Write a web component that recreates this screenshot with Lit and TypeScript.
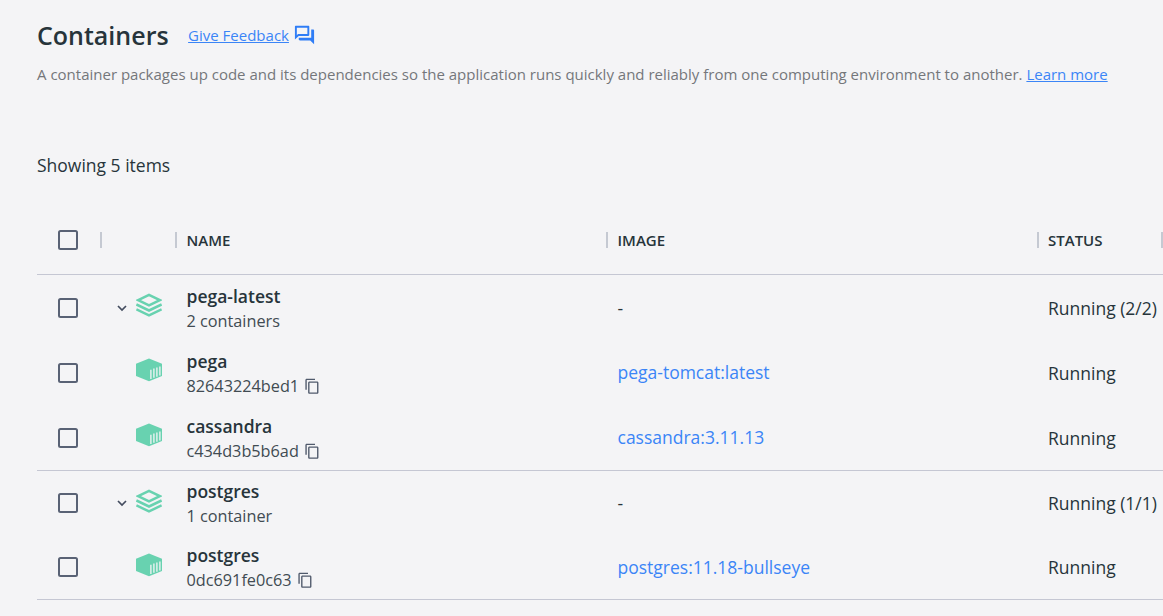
import { LitElement, html, css, svg, nothing } from "lit";
import { customElement } from "lit/decorators.js";
import { classMap } from "lit/directives/class-map.js";

interface Row {
  kind: "group" | "container";
  name: string;
  detail: string;
  image?: string;
  status: string;
  last?: boolean;
  compact?: boolean;
}

const rows: Row[] = [
  { kind: "group", name: "pega-latest", detail: "2 containers", status: "Running (2/2)" },
  { kind: "container", name: "pega", detail: "82643224bed1", image: "pega-tomcat:latest", status: "Running" },
  { kind: "container", name: "cassandra", detail: "c434d3b5b6ad", image: "cassandra:3.11.13", status: "Running", last: true },
  { kind: "group", name: "postgres", detail: "1 container", status: "Running (1/1)", compact: true },
  { kind: "container", name: "postgres", detail: "0dc691fe0c63", image: "postgres:11.18-bullseye", status: "Running", last: true, compact: true },
];

const stackIcon = html`<svg class="kind" width="26" height="24" viewBox="0 0 26 24" fill="none" stroke="#68d2b0" stroke-width="2.5">
  <path d="M2.200 7.100 13 1.900 23.800 7.100 13 12.300Z" />
  <path d="M.4 11.500 13 17.500 25.600 11.500" />
  <path d="M.4 16.400 13 22.400 25.600 16.400" />
</svg>`;

const cubeIcon = html`<svg class="kind" width="26" height="24" viewBox="0 0 26 24">
  <path fill="#68d2b0" d="M13 .5 26 5.8V18L13 23.3 0 18V5.8Z" />
  ${[0, 1, 2, 3].map(
    (i) => svg`<path stroke="#f4f4f6" stroke-width="1.3" d=${`M${14.9 + i * 3} ${11.7 - i * 1.1}V${20.9 - i * 1.1}`} />`,
  )}
</svg>`;

const chevronIcon = html`<svg class="chevron" width="10" height="7" viewBox="0 0 10 7">
  <path d="M1 1 5 5 9 1" fill="none" stroke="#434c5f" stroke-width="1.7" />
</svg>`;

const copyIcon = html`<svg class="copy" width="16.500" height="16.500" viewBox="0 0 24 24" fill="#505a6c">
  <path d="M16 1H4c-1.100 0-2 .9-2 2v14h2V3h12V1zm3 4H8c-1.100 0-2 .9-2 2v14c0 1.100.9 2 2 2h11c1.100 0 2-.9 2-2V7c0-1.100-.9-2-2-2zm0 16H8V7h11v14z" />
</svg>`;

const feedbackIcon = html`<svg class="forum" width="23" height="22" viewBox="0 0 24 24" preserveAspectRatio="none" fill="#2f7df6">
  <path d="M15 4v7H5.170L4 12.170V4h11m1-2H3c-.55 0-1 .45-1 1v14l4-4h10c.55 0 1-.45 1-1V3c0-.55-.45-1-1-1zm5 4h-2v9H6v2c0 .55.45 1 1 1h11l4 4V7c0-.55-.45-1-1-1z" />
</svg>`;

@customElement("app-root")
export class AppRoot extends LitElement {
  static styles = css`
    :host {
      display: block;
      box-sizing: border-box;
      width: 100%;
      height: 616px;
      overflow: hidden;
      padding-left: 37px;
      background: #f4f4f6;
      color: #27343b;
      font-family: "Open Sans", sans-serif;
      font-size: 17.5px;
    }
    svg {
      display: block;
      flex: none;
    }
    a {
      color: #3b85f7;
    }
    .heading {
      display: flex;
      align-items: center;
      height: 32px;
      padding-top: 19px;
    }
    h1 {
      margin: 0 19.5px 0 0;
      font-size: 25px;
      line-height: 32px;
      font-weight: 600;
    }
    .feedback {
      font-size: 15px;
      line-height: 30px;
    }
    .forum {
      margin-left: 4.5px;
    }
    .intro {
      margin: 11px 0 0;
      font-size: 15px;
      line-height: 24px;
      color: #74777b;
      white-space: nowrap;
    }
    .count {
      margin: 66px 0 0;
      line-height: 26px;
    }
    .line {
      display: grid;
      grid-template-columns: 63px 75px 431px 430.5px 1fr;
      box-sizing: border-box;
      height: 65px;
      align-items: center;
      white-space: nowrap;
    }
    .line.head {
      height: 69px;
      margin-top: 28px;
      border-bottom: 1px solid #c5c7d3;
      font-size: 15px;
      font-weight: 600;
    }
    .line.compact {
      height: 64px;
    }
    .line.last {
      height: 66px;
      border-bottom: 1px solid #c5c7d3;
    }
    .line.last.compact {
      height: 65px;
    }
    .box {
      box-sizing: border-box;
      width: 20px;
      height: 20px;
      margin-left: 21px;
      border: 2px solid #596275;
      border-radius: 2.5px;
    }
    .title {
      border-left: 2px solid #c5c9d2;
      height: 16px;
      line-height: 16px;
      padding-left: 9.5px;
    }
    .edge {
      justify-self: end;
      padding: 0;
    }
    .line.head {
      grid-template-columns: 63px 75px 431px 430.5px 1fr 2px;
    }
    .icons {
      display: flex;
      align-items: center;
      justify-content: flex-end;
      padding-right: 13px;
      gap: 9.5px;
    }
    .kind {
      margin-top: -5px;
    }
    .chevron {
      margin-top: 1px;
    }
    .cell {
      padding-left: 11.5px;
    }
    .name-cell {
      padding-top: 2px;
    }
    .image-cell {
      padding-bottom: 1px;
    }
    .name {
      font-weight: 600;
      line-height: 25px;
    }
    .detail {
      display: flex;
      align-items: center;
      font-size: 16.25px;
      line-height: 25px;
      color: #414b52;
    }
    .copy {
      margin-left: 5px;
    }
    .link {
      color: #3b85f7;
    }
  `;

  private renderRow(row: Row) {
    const group = row.kind === "group";
    return html`<div class=${classMap({ line: true, last: !!row.last, compact: !!row.compact })}>
      <div class="box"></div>
      <div class="icons">${group ? chevronIcon : nothing}${group ? stackIcon : cubeIcon}</div>
      <div class="cell name-cell">
        <div class="name">${row.name}</div>
        <div class="detail"><span>${row.detail}</span>${group ? nothing : copyIcon}</div>
      </div>
      ${row.image ? html`<div class="cell image-cell link">${row.image}</div>` : html`<div class="cell">-</div>`}
      <div class="cell">${row.status}</div>
    </div>`;
  }

  render() {
    return html`
      <div class="heading">
        <h1>Containers</h1>
        <a class="feedback" href="#">Give Feedback</a>${feedbackIcon}
      </div>
      <p class="intro">A container packages up code and its dependencies so the application runs quickly and reliably from one computing environment to another. <a href="#">Learn more</a></p>
      <p class="count">Showing 5 items</p>
      <div class="line head">
        <div class="box"></div>
        <div class="title"></div>
        <div class="title">NAME</div>
        <div class="title">IMAGE</div>
        <div class="title">STATUS</div>
        <div class="title edge"></div>
      </div>
      ${rows.map((row) => this.renderRow(row))}
    `;
  }
}
